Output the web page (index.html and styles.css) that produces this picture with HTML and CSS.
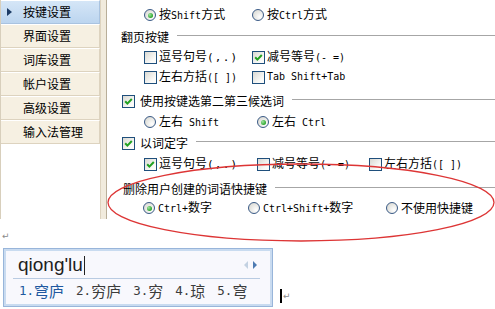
FILE: index.html
```html
<!DOCTYPE html>
<html lang="zh-CN">
<head>
<meta charset="utf-8">
<title>按键设置</title>
<link rel="stylesheet" href="styles.css">
</head>
<body>
<div class="window">
  <aside class="nav">
    <ul class="nav-list">
      <li class="nav-item active"><span class="tri"></span>按键设置</li>
      <li class="nav-item">界面设置</li>
      <li class="nav-item">词库设置</li>
      <li class="nav-item">帐户设置</li>
      <li class="nav-item">高级设置</li>
      <li class="nav-item">输入法管理</li>
    </ul>
    <div class="nav-edge"></div>
  </aside>

  <main class="settings">
    <div class="row opts top">
      <label class="opt w108"><span class="rd on"></span><span class="txt">按<span class="en">Shift</span>方式</span></label>
      <label class="opt"><span class="rd"></span><span class="txt">按<span class="en">Ctrl</span>方式</span></label>
    </div>

    <div class="row head h1"><span class="title">翻页按键</span><span class="rule"></span></div>
    <div class="row opts">
      <label class="opt w108"><span class="cb"></span><span class="txt">逗号句号<span class="en p">(,.)</span></span></label>
      <label class="opt"><span class="cb on"><svg viewBox="0 0 11 11"><polyline points="2.2,5.2 4.4,7.6 8.8,3"/></svg></span><span class="txt">减号等号<span class="en">(- =)</span></span></label>
    </div>
    <div class="row opts">
      <label class="opt w108"><span class="cb"></span><span class="txt">左右方括<span class="en">([ ])</span></span></label>
      <label class="opt"><span class="cb"></span><span class="txt en">Tab Shift+Tab</span></label>
    </div>

    <div class="row head h2"><span class="cb on"><svg viewBox="0 0 11 11"><polyline points="2.2,5.2 4.4,7.6 8.8,3"/></svg></span><span class="title">使用按键选第二第三候选词</span><span class="rule"></span></div>
    <div class="row opts m1">
      <label class="opt w113"><span class="rd"></span><span class="txt">左右<span class="en"> Shift</span></span></label>
      <label class="opt"><span class="rd on"></span><span class="txt">左右<span class="en"> Ctrl</span></span></label>
    </div>

    <div class="row head h3"><span class="cb on"><svg viewBox="0 0 11 11"><polyline points="2.2,5.2 4.4,7.6 8.8,3"/></svg></span><span class="title">以词定字</span><span class="rule"></span></div>
    <div class="row opts m1">
      <label class="opt w113"><span class="cb on"><svg viewBox="0 0 11 11"><polyline points="2.2,5.2 4.4,7.6 8.8,3"/></svg></span><span class="txt">逗号句号<span class="en p">(,.)</span></span></label>
      <label class="opt w112"><span class="cb"></span><span class="txt">减号等号<span class="en">(- =)</span></span></label>
      <label class="opt"><span class="cb"></span><span class="txt">左右方括<span class="en">([ ])</span></span></label>
    </div>

    <div class="row head h4"><span class="title">删除用户创建的词语快捷键</span><span class="rule"></span></div>
    <div class="row opts last">
      <label class="opt w105"><span class="rd on"></span><span class="txt"><span class="en">Ctrl+</span>数字</span></label>
      <label class="opt w138"><span class="rd"></span><span class="txt"><span class="en">Ctrl+Shift+</span>数字</span></label>
      <label class="opt"><span class="rd"></span><span class="txt">不使用快捷键</span></label>
    </div>
  </main>
</div>

<section class="doc">
  <div class="para"><span class="ret">↵</span></div>
  <div class="ime-line">
    <div class="ime">
      <div class="comp">
        <span class="pinyin">qiong'lu<span class="caret"></span></span>
        <svg class="pager" viewBox="0 0 16 10" width="16" height="10"><polygon class="prev" points="5,1 5,9 1,5"/><polygon class="next" points="10,1 10,9 14,5"/></svg>
      </div>
      <div class="sep"></div>
      <ol class="cands">
        <li class="cand sel"><span class="num">1.</span>穹庐</li>
        <li class="cand"><span class="num">2.</span>穷庐</li>
        <li class="cand"><span class="num">3.</span>穷</li>
        <li class="cand"><span class="num">4.</span>琼</li>
        <li class="cand"><span class="num">5.</span>穹</li>
      </ol>
    </div>
    <span class="ibeam"></span><span class="ret small">↵</span>
  </div>
</section>

<svg class="annot" width="495" height="309" viewBox="0 0 495 309"><ellipse cx="301" cy="202.5" rx="193" ry="38.5"/></svg>
</body>
</html>
```

FILE: styles.css
```css
* { box-sizing: border-box; margin: 0; padding: 0; }

html, body { background: #fff; }

body {
  width: 495px;
  height: 309px;
  overflow: hidden;
  position: relative;
  font: 12px/20px "Noto Sans CJK SC", "Noto Sans", sans-serif;
  color: #000;
}

.window {
  display: flex;
  height: 219px;
}

/* ---------- sidebar ---------- */
.nav {
  width: 107px;
  flex: none;
  display: flex;
  border-left: 1px solid #d8cfbc;
  background: #fff;
}

.nav-list {
  list-style: none;
  width: 99px;
}

.nav-item {
  height: 24px;
  line-height: 22px;
  padding-left: 22px;
  background: #f6f0e2;
  border-top: 1px solid #fff;
  border-bottom: 1px solid #ddd3bf;
  border-right: 1px solid #ddd3bf;
  display: flex;
  align-items: center;
}

.nav-item.active {
  background: linear-gradient(#d5e6f7, #bcd5ef);
  border-bottom-color: #a9c3e0;
  border-right-color: #a9c3e0;
  padding-left: 6px;
}

.tri {
  width: 0;
  height: 0;
  border-top: 4px solid transparent;
  border-bottom: 4px solid transparent;
  border-left: 5px solid #1d3c66;
  margin-right: 11px;
}

.nav-edge {
  width: 7px;
  background: #f1ebdd;
  border-left: 1px solid #ddd3bf;
  border-right: 1px solid #b8ae99;
}

/* ---------- settings ---------- */
.settings {
  flex: 1;
  padding: 5px 0 0 13px;
}

.row {
  display: flex;
  align-items: center;
  height: 20px;
  white-space: nowrap;
}

.opts { padding-left: 24px; }
.opts.last { padding-left: 23px; margin-top: -1px; }
.m1 { margin-top: 1px; }

.head { padding-left: 1px; }
.h1 { margin-top: 2px; }
.h2 { margin-top: 4px; padding-left: 2px; }
.h3 { margin-top: 1px; padding-left: 2px; }
.h4 { margin-top: 5px; padding-left: 3px; }

.head .cb { margin-right: 5px; }

.rule {
  flex: 1;
  height: 1px;
  background: #a6a6a6;
  margin: 0 0 4px 8px;
}

.opt {
  display: flex;
  align-items: center;
}
.w105 { width: 105px; }
.w108 { width: 108px; }
.w112 { width: 112px; }
.w113 { width: 113px; }
.w138 { width: 138px; }

.txt { white-space: pre; }

.en {
  font-family: "DejaVu Sans Mono", "Liberation Mono", monospace;
  font-size: 10px;
}
.en.p { font-size: 11px; letter-spacing: 1.2px; }

/* checkbox */
.cb {
  width: 13px;
  height: 13px;
  flex: none;
  border: 1px solid #1f4f7c;
  background: linear-gradient(135deg, #d9d9d3, #fbfbf9 75%);
  margin-right: 2px;
  display: flex;
}
.cb svg {
  width: 11px;
  height: 11px;
  fill: none;
  stroke: #21a121;
  stroke-width: 2;
}

/* radio */
.rd {
  width: 12px;
  height: 12px;
  flex: none;
  border-radius: 50%;
  border: 1px solid #3a5a86;
  background: radial-gradient(circle at 70% 70%, #ffffff, #dcdcd6 80%);
  margin-right: 3px;
  display: flex;
  align-items: center;
  justify-content: center;
}
.rd.on::after {
  content: "";
  width: 5px;
  height: 5px;
  border-radius: 50%;
  background: radial-gradient(circle at 35% 35%, #9fe59f, #2ca52c 70%);
}

/* ---------- document area ---------- */
.doc { padding-left: 2px; }

.para {
  height: 29px;
  padding-top: 7px;
  line-height: 16px;
}

.ret {
  font: 9px/10px "DejaVu Sans", sans-serif;
  color: #8a8a8a;
}

.ime-line {
  display: flex;
  align-items: flex-end;
}

.ime {
  margin-left: 1px;
  width: 270px;
  height: 59px;
  border: 1px solid #98b5da;
  box-shadow: inset 0 0 0 2px #c9dbf0;
  background: #f8f8fd;
  padding: 5px 10px 0 9px;
}

.comp {
  height: 22px;
  display: flex;
  align-items: center;
  justify-content: space-between;
  padding: 0 3px 0 5px;
}

.pinyin {
  font: 19px/22px "Liberation Sans", Arial, sans-serif;
  color: #1e1e1e;
  display: flex;
  align-items: center;
}

.caret {
  width: 1px;
  height: 19px;
  background: #222;
  margin-left: 1px;
}

.pager { margin-bottom: 1px; }
.pager .prev { fill: #c3d1e2; }
.pager .next { fill: #4d7ab2; }

.sep {
  height: 1px;
  background: #b9cbe2;
  margin: 2px 2px 0 0;
}

.cands {
  list-style: none;
  display: flex;
  gap: 12px;
  padding-left: 6px;
  margin-top: 2px;
  font-size: 15px;
  line-height: 20px;
  color: #3c3c3c;
}

.cand { display: flex; align-items: center; }
.cand.sel { color: #2058a0; }

.num {
  font-family: "DejaVu Sans Mono", "Liberation Mono", monospace;
  font-size: 12.5px;
}

.ibeam {
  width: 2px;
  height: 14px;
  background: #000;
  margin: 0 1px 4px 7px;
}

.ret.small { margin-bottom: 6px; }

/* ---------- hand-drawn annotation ---------- */
.annot {
  position: absolute;
  left: 0;
  top: 0;
  pointer-events: none;
}
.annot ellipse {
  fill: none;
  stroke: #dd3535;
  stroke-width: 1.3;
}
```
